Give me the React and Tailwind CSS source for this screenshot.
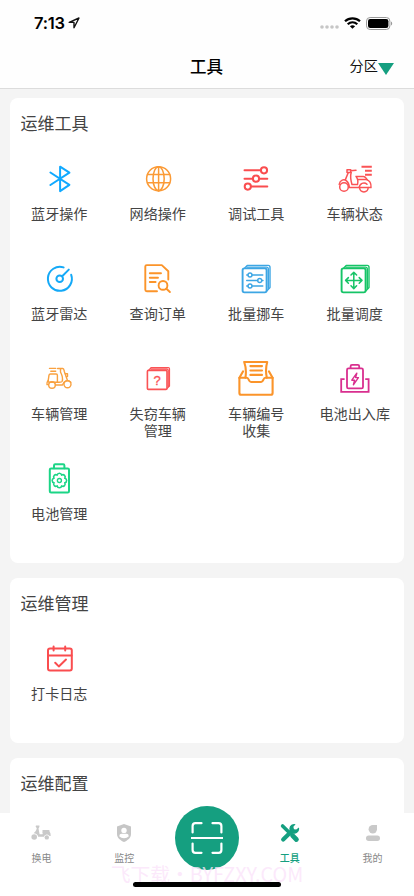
import React from "react";

const Icon = ({ color, sw = 1.7, children }) => (
  <svg
    className="block h-10 w-10 shrink-0"
    viewBox="-20 -20 40 40"
    fill="none"
    stroke={color}
    strokeWidth={sw}
    strokeLinecap="round"
    strokeLinejoin="round"
  >
    {children}
  </svg>
);

const Bluetooth = () => (
  <Icon color="#10a9ff" sw={2}>
    <path d="M-8.6 -6.5L10.4 5.8L1.1 12.1V-12.3L10.4 -6.3L-8.6 6" />
  </Icon>
);

const Globe = () => (
  <Icon color="#fb9a35" sw={1.5}>
    <circle cx=".6" cy="-.3" r="12" />
    <ellipse cx=".6" cy="-.3" rx="5.6" ry="12" />
    <path d="M.6 -12V12M-10.4 -4.6H11.6M-10.6 3.8H11.8" />
  </Icon>
);

const Sliders = () => (
  <Icon color="#fa4d4f" sw={2}>
    <path d="M-11.5 -8.7H4.8M-11.5 -.3H-3.2M3.2 -.3H11.3M-5 7.6H11.3" />
    <circle cx="8" cy="-8.7" r="3.1" />
    <circle cx="0" cy="-.3" r="3.1" />
    <circle cx="-8.2" cy="7.6" r="3.1" />
  </Icon>
);

const ScooterFast = () => (
  <Icon color="#fa5355" sw={1.5}>
    <path d="M6.5 -12.3H16.8M10 -8.3H16.8M10 -4.3H16.8" strokeWidth="2" strokeLinecap="butt" />
    <circle cx="-11" cy="8" r="4.3" />
    <path d="M-15.8 5.4C-15 .8 -11 -.2 -8.5 1.8C-6.5 3.4 -5.8 6 -5.6 8.6H4.2" />
    <path d="M-8 -9.3H-4.3V-6.5H-8ZM-4.3 -8.3L1 -8.8" />
    <path d="M-6.8 -6.3L-9.6 .6M-3.8 -6.5C-5.2 -2 -4 2 -3 5.6H2.5C3.5 2 3 0 1 -2.6H8.4C10.6 -2.6 11 -.6 12.2 .6" />
    <path d="M3 .4H11C15 1.5 16.3 5 16 8.6H13.4M4.2 8.6C4.5 4.5 9 2.5 12 5.2" />
    <path d="M4.6 8.6A4.2 4.2 0 0 0 13.2 8.6Z" />
  </Icon>
);

const Radar = () => (
  <Icon color="#14a9f7" sw={2}>
    <path d="M4.6 -11.6A12 12 0 1 0 12.2 -4.2" />
    <circle cx=".7" cy="-.3" r="3.3" />
    <path d="M3.2 -2.8L9.8 -9.4" />
  </Icon>
);

const DocSearch = () => (
  <Icon color="#fb942a" sw={1.9}>
    <path d="M-1 12.3H-11.2Q-12.7 12.3 -12.7 10.8V-12.4Q-12.7 -13.9 -11.2 -13.9H3.8L10.3 -7.7V.6" />
    <path d="M-8.2 -5.7H3M-8.2 -1.3H0M-8.2 3H-2.4" />
    <circle cx="5" cy="6.4" r="4.4" />
    <path d="M8.4 9.7L11.9 13" />
  </Icon>
);

const Stack = () => (
  <>
    <rect x="-13.4" y="-10.6" width="24" height="24" rx="1.8" />
    <path d="M-11.2 -11L-8.8 -13.6H12.2Q14 -13.6 14 -11.8V8.6L11.2 11.5M-9 -11.9H10.4Q12.3 -11.9 12.3 -10V10" strokeWidth="1.4" />
  </>
);

const BatchMove = () => (
  <Icon color="#3da6e4" sw={1.9}>
    <Stack />
    <g strokeWidth="1.4">
      <path d="M-9.3 -4H-8M-4 -4H6.8M-9.3 1.5H1.7M5.7 1.5H7M-9.3 7H-8M-4 7H6.8" />
      <circle cx="-6" cy="-4" r="2" />
      <circle cx="3.7" cy="1.5" r="2" />
      <circle cx="-6" cy="7" r="2" />
    </g>
  </Icon>
);

const BatchDispatch = () => (
  <Icon color="#16c467" sw={1.9}>
    <Stack />
    <path
      d="M-1.2 -6.8V9.6M-9.4 1.4H7M-4 -4L-1.2 -6.8L1.6 -4M-4 6.8L-1.2 9.6L1.6 6.8M-6.6 -1.4L-9.4 1.4L-6.6 4.2M4.2 -1.4L7 1.4L4.2 4.2"
      strokeWidth="1.5"
    />
  </Icon>
);

const ScooterBox = () => (
  <Icon color="#f9a13f" sw={1.4}>
    <path d="M-9.5 -10.6H-3.3M-8.2 -7.8H-3.3M-1.4 -10.5H3.8C5 -10.5 5 -9 5.3 -7.5L8.3 1" />
    <path d="M-8.6 -5H-2.8Q-1.6 -5 -1.6 -3.8V3.2H-9.6Q-11 3.2 -10.8 1.6L-10 -3.8Q-9.8 -5 -8.6 -5Z" />
    <path d="M1.5 -10.3V-7C3 -4 4 0 3.2 2.3C2.8 3.3 1.5 3.5 -1.6 3.2M-10.8 1.4C-12 2.6 -12.4 4 -12 5.6H-10.5M-3.6 6H3.5C5 1.5 9 .3 11.8 3.3M6.3 -5.2H8.5V-2.4H7.5" />
    <circle cx="-7" cy="6" r="3.3" />
    <circle cx="8.5" cy="5.2" r="3.5" />
  </Icon>
);

const Stolen = () => (
  <Icon color="#fa5355" sw={1.6}>
    <rect x="-10.6" y="-8.6" width="19.6" height="19" rx="1" />
    <path d="M-9 -9.2L-7 -11.3H10.4Q11.5 -11.3 11.5 -10.2V7L9.4 9.2M-7 -9.9H9Q10.2 -9.9 10.2 -8.7V8" strokeWidth="1.2" />
    <text
      x="-.8"
      y="5.8"
      textAnchor="middle"
      fill="#fa5355"
      strokeWidth=".3"
      className="font-['Liberation_Sans',sans-serif] text-[13px]"
    >
      ?
    </text>
  </Icon>
);

const Inbox = () => (
  <Icon color="#fb942a" sw={2.1}>
    <path d="M-16.6 -1.2H-9.2C-7 -1.2 -7.4 3 -5 3H5.2C7.6 3 7 -1.2 9.4 -1.2H16.6V14Q16.6 15.8 14.8 15.8H-14.8Q-16.6 15.8 -16.6 14Z" />
    <path d="M-16.6 -1.2L-13 -7.6M16.6 -1.2L13 -7.6M-10.6 -1.4C-9.8 -6 -10 -12 -11.8 -17H11.2C9.8 -12 9.8 -6 10.8 -1.4M-5.6 -12.9H6M-5.6 -8.5H6M-5.6 -4.1H6" />
  </Icon>
);

const BatteryDock = () => (
  <Icon color="#d92f8f" sw={1.8}>
    <rect x="-8" y="-10.6" width="16" height="20" rx="1.5" />
    <path d="M-4.4 -10.8V-12.8Q-4.4 -14.2 -3 -14.2H2.8Q4.2 -14.2 4.2 -12.8V-10.8" />
    <path d="M-10.4 .2H-13.8V12.8H13.6V.2H10.2" strokeLinejoin="miter" strokeLinecap="butt" />
    <path d="M1.8 -5.8L-3.2 1.2H-.4L-1.6 5.8L3.4 -1.4H.6Z" strokeWidth="1.4" />
  </Icon>
);

const gearPath = () => {
  const n = 8;
  const point = (i) => {
    const a = ((i + 0.5) * 2 * Math.PI) / n;
    return `${(0.4 + 5.8 * Math.cos(a)).toFixed(2)} ${(1.5 + 5.8 * Math.sin(a)).toFixed(2)}`;
  };
  let d = `M${point(0)}`;
  for (let i = 1; i <= n; i++) d += `A2.25 2.25 0 0 1 ${point(i)}`;
  return d + "Z";
};

const BatteryGear = () => (
  <Icon color="#1bd586" sw={2}>
    <rect x="-9.2" y="-10.6" width="19.2" height="24.2" rx="1.3" />
    <path d="M-5 -10.8V-13.6Q-5 -14.8 -3.8 -14.8H4.2Q5.4 -14.8 5.4 -13.6V-10.8" />
    <path d={gearPath()} strokeWidth="1.6" />
    <circle cx=".4" cy="1.5" r="2" strokeWidth="1.4" />
  </Icon>
);

const Calendar = () => (
  <Icon color="#fa4d4f" sw={2}>
    <rect x="-11" y="-10.4" width="23.8" height="22" rx="2" />
    <path d="M-11 -3.6H12.6M-5.4 -12.6V-8.6M6.2 -12.6V-8.6M-3.8 3.8L-.2 7.4L7 .6" />
  </Icon>
);

const tools = [
  ["蓝牙操作", Bluetooth],
  ["网络操作", Globe],
  ["调试工具", Sliders],
  ["车辆状态", ScooterFast],
  ["蓝牙雷达", Radar],
  ["查询订单", DocSearch],
  ["批量挪车", BatchMove],
  ["批量调度", BatchDispatch],
  ["车辆管理", ScooterBox],
  ["失窃车辆管理", Stolen],
  ["车辆编号收集", Inbox],
  ["电池出入库", BatteryDock],
  ["电池管理", BatteryGear],
];

const Card = ({ title, items = [], className }) => (
  <section className={`shrink-0 rounded-lg bg-white ${className}`}>
    <h2 className="px-[10.5px] pt-3 text-[17px] leading-[26px] text-[#444]">{title}</h2>
    <div className="grid grid-cols-4 pt-[23px]">
      {items.map(([label, Glyph]) => (
        <div key={label} className="flex h-[100px] flex-col items-center">
          <Glyph />
          <span
            className={`mt-1.5 text-center text-[14.1px] leading-[17px] text-[#444] ${
              label.length > 5 ? "w-[60px]" : "whitespace-nowrap"
            }`}
          >
            {label}
          </span>
        </div>
      ))}
    </div>
  </section>
);

const StatusBar = () => (
  <div className="flex h-11 items-center justify-between pr-[21px] pl-[34px] pt-0.5">
    <div className="flex items-center gap-[3px]">
      <span className="font-['Inter',sans-serif] text-[16.5px] leading-5 font-semibold tracking-[-0.2px] text-black">7:13</span>
      <svg className="h-3 w-3" viewBox="0 0 12 12" fill="none" stroke="#111" strokeWidth="1.4" strokeLinejoin="round">
        <path d="M11 1L1.2 5.4H6V10.8Z" />
      </svg>
    </div>
    <div className="flex items-center">
      <svg className="mt-[7px] h-1 w-[19px]" viewBox="0 0 19 4" fill="#c6c6c6">
        <circle cx="2" cy="2" r="1.8" />
        <circle cx="7" cy="2" r="1.8" />
        <circle cx="12" cy="2" r="1.8" />
        <circle cx="17" cy="2" r="1.8" />
      </svg>
      <svg className="ml-[5px] h-3 w-[17px]" viewBox="0 0 17 12" fill="none" stroke="#000" strokeWidth="2.2">
        <path d="M1 4.3C5.2 .3 11.8 .3 16 4.3M3.7 7.2C6.5 4.6 10.5 4.6 13.3 7.2" />
        <path d="M8.5 11.8L5.9 9.2C7.4 7.9 9.6 7.9 11.1 9.2Z" fill="#000" stroke="none" />
      </svg>
      <svg className="ml-[5px] h-[13px] w-[27px]" viewBox="0 0 27 13">
        <rect x=".5" y=".5" width="23.4" height="12" rx="3.6" fill="none" stroke="#999" />
        <rect x="2" y="2" width="20.4" height="9" rx="2.2" fill="#000" />
        <path d="M25 4.5C26.6 5 26.6 8 25 8.5Z" fill="#999" />
      </svg>
    </div>
  </div>
);

const ScooterTab = () => (
  <svg className="h-5 w-5" viewBox="0 0 20 20" fill="#c9c9c9">
    <circle cx="3.2" cy="14" r="2.8" />
    <path d="M5 2.6H8.4V4L7.5 5.4L8.6 11.3H11.5L12 8.6H18.5Q19.8 10 19.7 13H18.6A3 3 0 0 0 13 13.8H7.2C6.8 11.4 5 10.2 2.6 10.2C4 9 5.4 7.6 5.8 5.2L4.6 3.6Z" />
    <path d="M11.5 7H18.4V10H11.5Z" />
    <circle cx="15.8" cy="14.4" r="2.2" />
  </svg>
);

const ShieldTab = () => (
  <svg className="h-5 w-5" viewBox="0 0 20 20">
    <path d="M10 1L17 3.6V11C17 15 13.5 17.5 10 19C6.5 17.5 3 15 3 11V3.6Z" fill="#c6c6c6" />
    <circle cx="10" cy="7.4" r="2.7" fill="#fff" />
    <path d="M5.2 13.2Q5.4 10.8 7.6 10.8H12.4Q14.6 10.8 14.8 13.2Q13 15.2 10 15.2Q7 15.2 5.2 13.2Z" fill="#fff" />
  </svg>
);

const ToolsTab = () => (
  <svg className="h-5 w-5" viewBox="0 0 20 20" fill="none" stroke="#159f80" strokeLinecap="round">
    <path d="M2.6 3L8.5 8.8" strokeWidth="3.6" />
    <path d="M12.6 12.6L16.4 16.5" strokeWidth="4.8" />
    <path d="M3.2 16.6L12.4 7.6" strokeWidth="4.2" />
    <path d="M15.6 1.2A4.9 4.9 0 1 0 18.9 4.4L16.2 6.6L13.9 6.2L13.4 3.8Z" fill="#159f80" stroke="none" />
  </svg>
);

const MineTab = () => (
  <svg className="h-5 w-5" viewBox="0 0 20 20" fill="#c9c9c9">
    <path d="M14 2V6.2A4.2 4.2 0 1 1 9.8 2Z" />
    <rect x="3" y="12.6" width="14" height="5.4" rx="2.7" />
  </svg>
);

const Tab = ({ label, active, children }) => (
  <div className="flex flex-1 flex-col items-center pt-[10px]">
    {children}
    <span className={`mt-[9px] text-[10px] leading-3 ${active ? "font-medium text-[#159f80]" : "text-[#888]"}`}>{label}</span>
  </div>
);

export default function App() {
  return (
    <div className="flex h-[896px] w-[414px] flex-col overflow-hidden bg-[#f4f4f4] font-['Noto_Sans_CJK_SC',sans-serif]">
      <header className="h-[89px] shrink-0 border-b border-[#dcdcdc] bg-[#fefefe]">
        <StatusBar />
        <div className="grid h-11 grid-cols-3 items-center pr-5">
          <h1 className="col-start-2 pl-[19px] text-center text-[16.5px] leading-6 font-medium text-black">工具</h1>
          <div className="flex items-center justify-end">
            <span className="pb-0.5 text-[14.2px] leading-5 text-[#111]">分区</span>
            <svg className="mt-[5px] h-3 w-4" viewBox="0 0 16 12" fill="#159f80">
              <path d="M0 0H16L8 12Z" />
            </svg>
          </div>
        </div>
      </header>

      <main className="flex min-h-0 flex-1 flex-col gap-[15px] overflow-hidden px-[10px] pt-[9px]">
        <Card title="运维工具" items={tools} className="h-[465px]" />
        <Card title="运维管理" items={[["打卡日志", Calendar]]} className="h-[165px]" />
        <Card title="运维配置" className="h-[165px]" />
      </main>

      <nav className="relative flex h-[83px] shrink-0 bg-white">
        <Tab label="换电">
          <ScooterTab />
        </Tab>
        <Tab label="监控">
          <ShieldTab />
        </Tab>
        <div className="flex flex-1 justify-center">
          <div className="-mt-[7px] flex h-16 w-16 items-center justify-center rounded-full bg-[#159f80]">
            <svg className="h-8 w-8" viewBox="0 0 32 32" fill="none" stroke="#fff" strokeWidth="2.2" strokeLinecap="round" strokeLinejoin="round">
              <path d="M1.6 10.5V4Q1.6 1.2 4.4 1.2H10.5M21.5 1.2H27.6Q30.4 1.2 30.4 4V10.5M1.6 21.5V28Q1.6 30.8 4.4 30.8H10.5M21.5 30.8H27.6Q30.4 30.8 30.4 28V21.5M.6 16H31.4" />
            </svg>
          </div>
        </div>
        <Tab label="工具" active>
          <ToolsTab />
        </Tab>
        <Tab label="我的">
          <MineTab />
        </Tab>
        <div className="absolute inset-x-0 top-[52px] text-center text-[19.8px] leading-[18px] whitespace-nowrap text-[#fbe3fa]/80">
          飞下载・BYFZXY.COM
        </div>
        <div className="absolute bottom-[9px] left-[133px] h-[5px] w-[148px] rounded-full bg-black" />
      </nav>
    </div>
  );
}
